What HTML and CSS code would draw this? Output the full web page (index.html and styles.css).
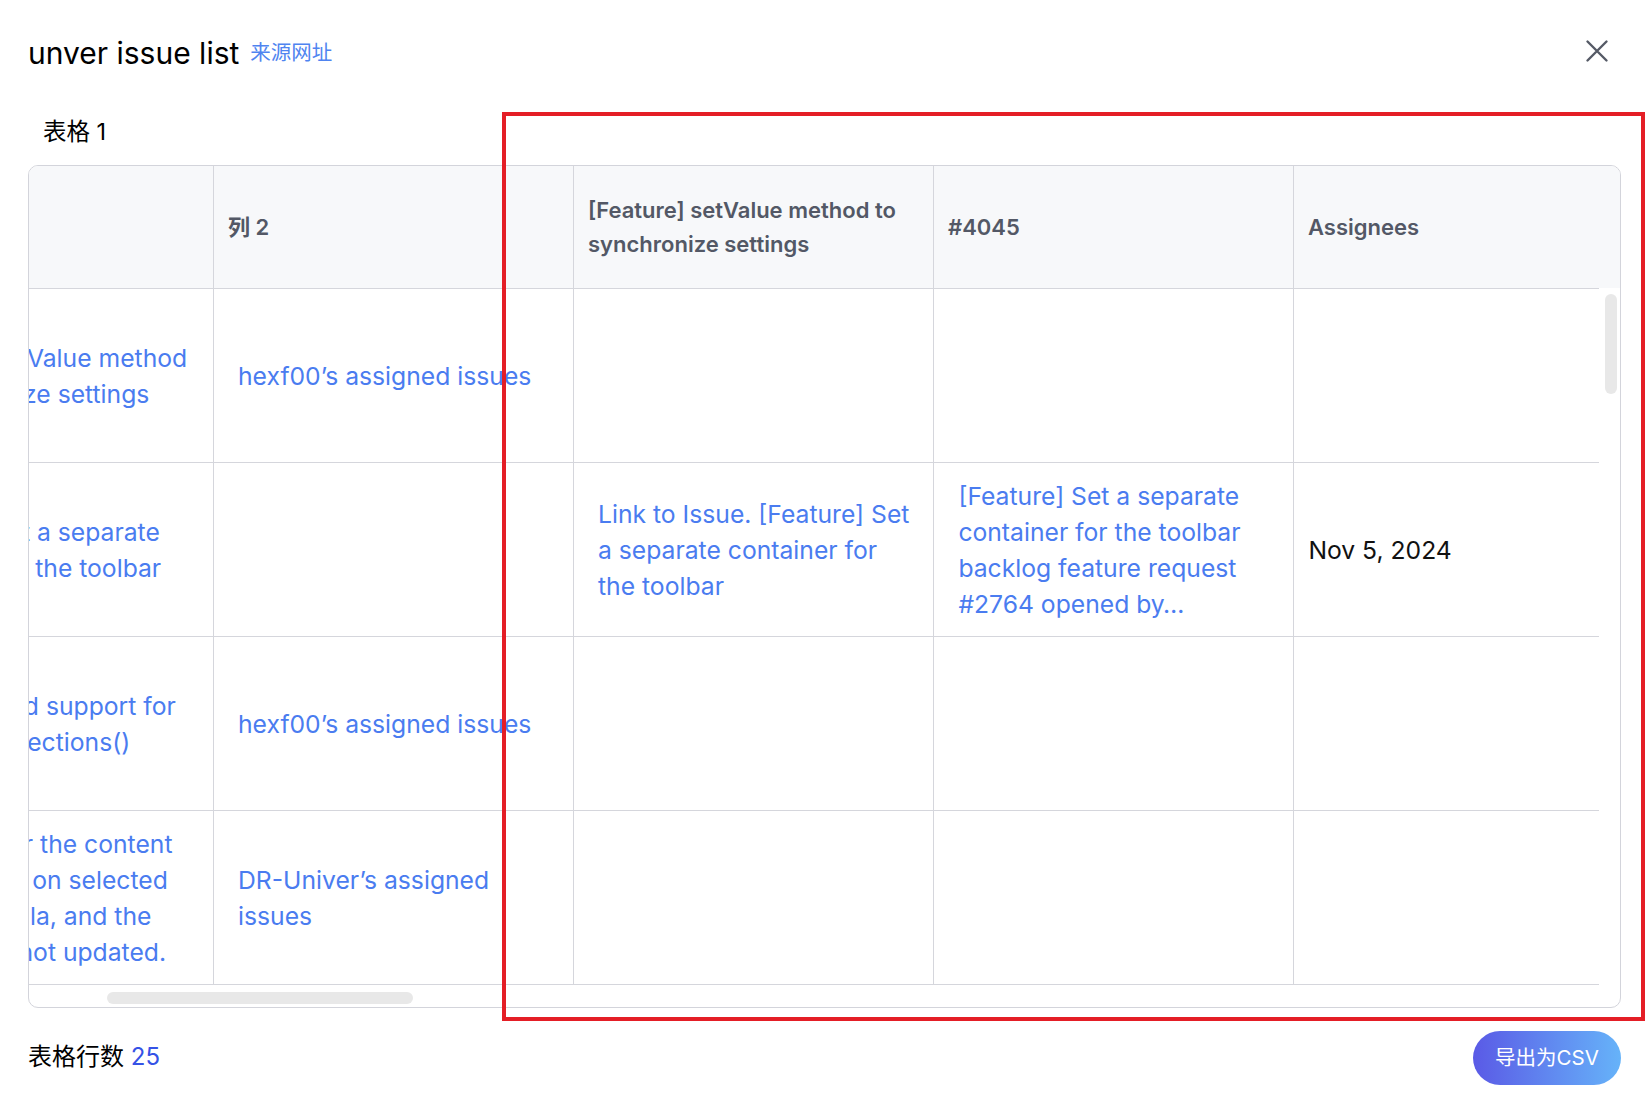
FILE: index.html
```html
<!DOCTYPE html>
<html lang="zh">
<head>
<meta charset="utf-8">
<title>unver issue list</title>
<link rel="stylesheet" href="styles.css">
</head>
<body>
<div class="dialog">
  <div class="topbar">
    <h1 class="title">unver issue list</h1>
    <a class="source" href="#">来源网址</a>
    <button class="close" aria-label="close">
      <svg width="24" height="24" viewBox="0 0 24 24"><path d="M2.5 2.5 L21.5 21.5 M21.5 2.5 L2.5 21.5" stroke="#555a66" stroke-width="2.4" stroke-linecap="round" fill="none"/></svg>
    </button>
  </div>
  <div class="section-label">表格 1</div>
  <div class="card">
    <div class="thead-clip">
      <div class="row head-row">
        <div class="th"></div>
        <div class="th">列 2</div>
        <div class="th">[Feature] setValue method to synchronize settings</div>
        <div class="th">#4045</div>
        <div class="th">Assignees</div>
      </div>
    </div>
    <div class="tbody-clip">
      <div class="row body-row">
        <div class="td"><a class="link" href="#">[Feature] setValue method<br>to synchronize settings</a></div>
        <div class="td"><a class="link" href="#">hexf00’s assigned issues</a></div>
        <div class="td"></div>
        <div class="td"></div>
        <div class="td"></div>
      </div>
      <div class="row body-row">
        <div class="td"><a class="link" href="#">[Feature] Set a separate<br>container for the toolbar</a></div>
        <div class="td"></div>
        <div class="td"><a class="link" href="#">Link to Issue. [Feature] Set<br>a separate container for<br>the toolbar</a></div>
        <div class="td"><a class="link" href="#">[Feature] Set a separate<br>container for the toolbar<br>backlog feature request<br>#2764 opened by…</a></div>
        <div class="td"><span class="plain">Nov 5, 2024</span></div>
      </div>
      <div class="row body-row">
        <div class="td"><a class="link" href="#">[Feature] Add support for<br>range.getSelections()</a></div>
        <div class="td"><a class="link" href="#">hexf00’s assigned issues</a></div>
        <div class="td"></div>
        <div class="td"></div>
        <div class="td"></div>
      </div>
      <div class="row body-row">
        <div class="td"><a class="link" href="#">[Bug] Render the content<br>are modified on selected<br>with a Formula, and the<br>the value is not updated.</a></div>
        <div class="td"><a class="link" href="#">DR-Univer’s assigned<br>issues</a></div>
        <div class="td"></div>
        <div class="td"></div>
        <div class="td"></div>
      </div>
    </div>
    <div class="vthumb"></div>
    <div class="hthumb"></div>
  </div>
  <div class="footer">
    <div class="count">表格行数 <span class="num">25</span></div>
    <button class="export">导出为CSV</button>
  </div>
</div>
<div class="annotation"></div>
</body>
</html>
```
FILE: styles.css
```css
html, body {
  margin: 0;
  background: #ffffff;
}
body {
  font-family: Inter, "Noto Sans CJK SC", sans-serif;
  color: #111111;
  position: relative;
  width: 1652px;
  height: 1094px;
  overflow: hidden;
}
.dialog {
  padding: 35px 31px 0 28px;
}
.topbar {
  display: flex;
  align-items: center;
  height: 36px;
}
.title {
  margin: 0;
  font-size: 30px;
  font-weight: 400;
  line-height: 36px;
  color: #000000;
}
.source {
  margin-left: 11px;
  font-size: 20.5px;
  line-height: 36px;
  color: #4f84f0;
  text-decoration: none;
}
.close {
  margin-left: auto;
  margin-right: 12px;
  margin-bottom: 4px;
  border: 0;
  background: none;
  padding: 0;
  width: 24px;
  height: 24px;
  display: block;
}
.close svg {
  display: block;
}
.section-label {
  margin-top: 46px;
  padding-left: 15px;
  font-size: 23.5px;
  line-height: 30px;
  color: #000000;
  margin-bottom: 18px;
}
.card {
  position: relative;
  box-sizing: border-box;
  height: 843px;
  border: 1px solid #d3d4db;
  border-radius: 10px;
  overflow: hidden;
}
.row {
  display: flex;
  margin-left: -175px;
}
.thead-clip {
  overflow: hidden;
  height: 122px;
  background: #f7f8fa;
}
.head-row {
  height: 122px;
}
.th {
  flex: 0 0 360px;
  box-sizing: border-box;
  border-right: 1px solid #d5d6dc;
  display: flex;
  align-items: center;
  padding: 0 14px;
  font-size: 22px;
  font-weight: 600;
  line-height: 34px;
  color: #535866;
}
.tbody-clip {
  width: 1570px;
  overflow: hidden;
  border-top: 1px solid #d5d6dc;
}
.body-row {
  box-sizing: border-box;
  height: 174px;
  border-bottom: 1px solid #d5d6dc;
}
.td {
  flex: 0 0 360px;
  box-sizing: border-box;
  border-right: 1px solid #d5d6dc;
  display: flex;
  align-items: center;
  padding: 0 14px;
  font-size: 24.7px;
  line-height: 36px;
}
.link {
  color: #4a7cf0;
  text-decoration: none;
  padding: 0 10px;
  white-space: nowrap;
}
.td:first-child .link {
  padding-left: 11px;
}
.plain {
  color: #111111;
}
.vthumb {
  position: absolute;
  left: 1576px;
  top: 128px;
  width: 12px;
  height: 100px;
  border-radius: 6px;
  background: #e8e8e8;
}
.hthumb {
  position: absolute;
  left: 78px;
  top: 826px;
  width: 306px;
  height: 12px;
  border-radius: 6px;
  background: #e8e8e8;
}
.footer {
  margin-top: 23px;
  display: flex;
  justify-content: space-between;
  align-items: center;
}
.count {
  font-size: 24px;
  line-height: 30px;
  color: #000000;
  margin-bottom: 2px;
}
.num {
  color: #3552e6;
}
.export {
  width: 148px;
  height: 54px;
  border: 0;
  border-radius: 27px;
  background: linear-gradient(90deg, #5a5ae6 0%, #66b3f9 100%);
  color: #ffffff;
  font-family: Inter, "Noto Sans CJK SC", sans-serif;
  font-size: 20.5px;
  padding: 0 0 5px 0;
}
.annotation {
  position: absolute;
  left: 502px;
  top: 112px;
  width: 1143px;
  height: 909px;
  box-sizing: border-box;
  border: 4px solid #e41e26;
  pointer-events: none;
}
```
